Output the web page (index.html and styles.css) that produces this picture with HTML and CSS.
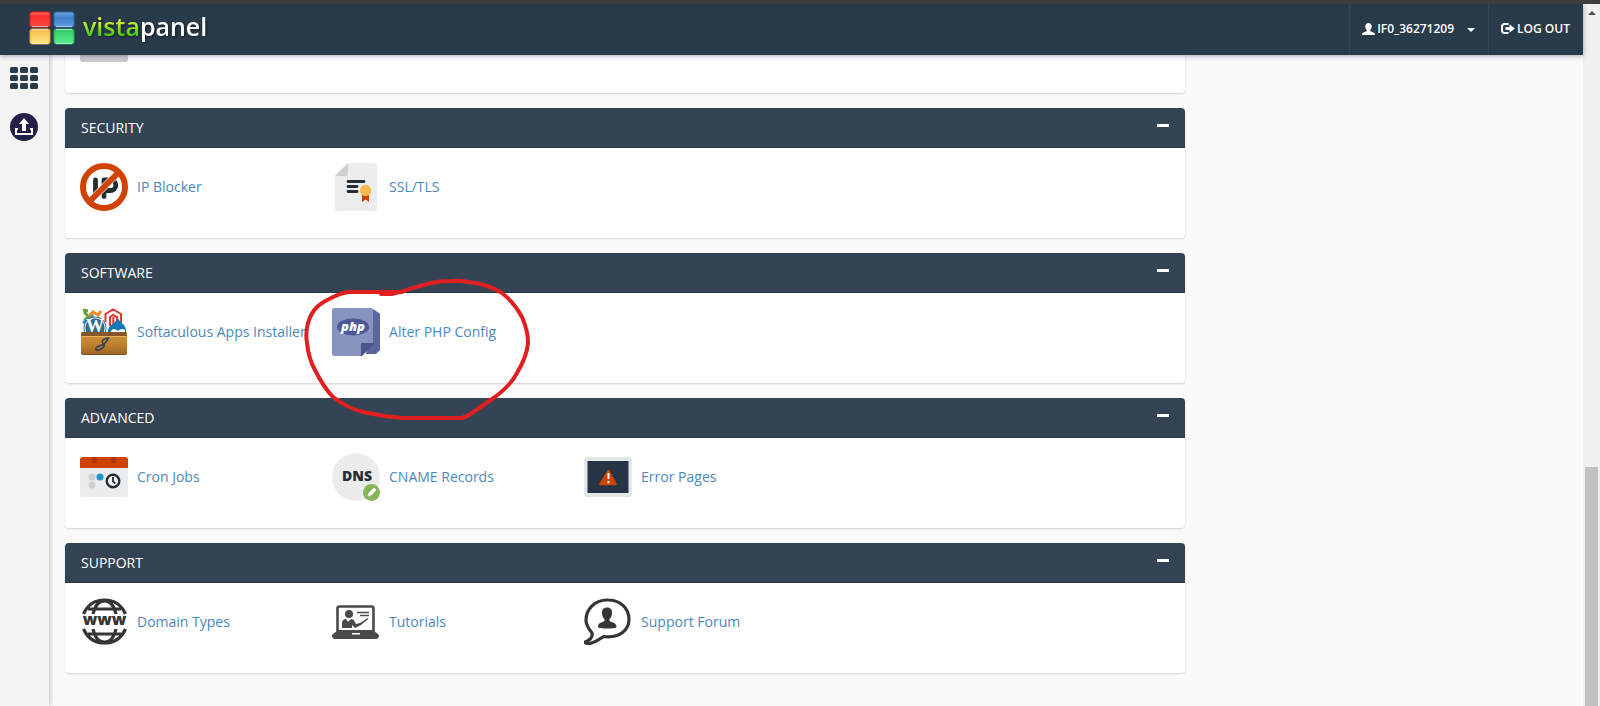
FILE: index.html
```html
<!DOCTYPE html>
<html lang="en">
<head>
  <meta charset="UTF-8" />
  <title>VistaPanel</title>
  <link rel="stylesheet" href="styles.css">
</head>
<body>
  <div class="page">
    <header class="topbar">
      <a class="logo" href="#">
        <svg class="logo-mark" viewBox="0 0 46 34" aria-hidden="true">
          <defs>
            <linearGradient id="red" x2="0" y2="1"><stop offset="0" stop-color="#ff6a5e"/><stop offset=".3" stop-color="#f92f30"/><stop offset="1" stop-color="#ff4a44"/></linearGradient>
            <linearGradient id="blue" x2="0" y2="1"><stop offset="0" stop-color="#6fa5df"/><stop offset=".4" stop-color="#3f83cc"/><stop offset="1" stop-color="#5f9ee0"/></linearGradient>
            <linearGradient id="yellow" x2="0" y2="1"><stop offset="0" stop-color="#f5bd50"/><stop offset="1" stop-color="#ffe67e"/></linearGradient>
            <linearGradient id="green" x2="0" y2="1"><stop offset="0" stop-color="#35c765"/><stop offset="1" stop-color="#56f090"/></linearGradient>
          </defs>
          <rect x="1" y="1" width="20" height="15" rx="2" fill="url(#red)" stroke="#e01c22"/>
          <rect x="25" y="1" width="20" height="15" rx="2" fill="url(#blue)" stroke="#2268b0"/>
          <rect x="1" y="18" width="20" height="15" rx="2" fill="url(#yellow)" stroke="#e0a03c"/>
          <rect x="25" y="18" width="20" height="15" rx="2" fill="url(#green)" stroke="#22a752"/>
          <path d="M3 15.500h16M27 15.500h16M3 18.500h16M27 18.500h16M3 32.500h16M27 32.500h16" stroke="#fff" stroke-opacity=".6"/>
        </svg>
        <span class="logo-text"><span class="logo-vista">vista</span>panel</span>
      </a>
      <nav class="user-nav">
        <a href="#">
          <svg width="13" height="12" viewBox="0 0 13 12" aria-hidden="true"><path fill="#fff" d="M6.500 0C4.400 0 3.300 1.300 3.300 3.200c0 1.600.6 3.100 1.600 3.900v1L1 9.700C.3 10 0 10.600 0 12h13c0-1.400-.3-2-1-2.300L8.100 8.100v-1c1-.8 1.600-2.300 1.600-3.900C9.700 1.300 8.600 0 6.500 0z"/></svg>
          <span>IF0_36271209</span>
          <i class="caret"></i>
        </a>
        <a href="#">
          <svg width="14" height="11" viewBox="0 0 14 11" aria-hidden="true"><path d="M7.500 1H3.400A2.400 2.400 0 0 0 1 3.400v4.200A2.400 2.400 0 0 0 3.400 10h4.100" fill="none" stroke="#fff" stroke-width="2"/><path fill="#fff" d="M4.500 4h4V1.300L13.800 5.500 8.500 9.700V7h-4z"/></svg>
          <span>LOG OUT</span>
        </a>
      </nav>
    </header>

    <div class="content">
      <aside class="sidebar">
        <a href="#" aria-label="Home">
          <svg width="28" height="22" viewBox="0 0 28 22" fill="#293a4a"><rect width="8" height="6" rx="1.500"/><rect x="10" width="8" height="6" rx="1.500"/><rect x="20" width="8" height="6" rx="1.500"/><rect y="8" width="8" height="6" rx="1.500"/><rect x="10" y="8" width="8" height="6" rx="1.500"/><rect x="20" y="8" width="8" height="6" rx="1.500"/><rect y="16" width="8" height="6" rx="1.500"/><rect x="10" y="16" width="8" height="6" rx="1.500"/><rect x="20" y="16" width="8" height="6" rx="1.500"/></svg>
        </a>
        <a href="#" aria-label="Upload">
          <svg width="28" height="28" viewBox="0 0 28 28"><circle cx="14" cy="14" r="14" fill="#22204a"/><path fill="#fff" d="M14 5l5 6h-3v7h-4v-7H9z"/><path d="M8 16H6v5h16v-5h-2" fill="none" stroke="#fff" stroke-width="2"/></svg>
        </a>
      </aside>

      <main class="main">
        <section class="panel panel-cut">
          <div class="cut-icon"></div>
        </section>

        <section class="panel">
          <h2 class="panel-head">SECURITY <button type="button" class="toggle" aria-label="Collapse Security"></button></h2>
          <div class="panel-body">
            <a class="item" href="#">
              <svg class="icon" viewBox="0 0 48 48">
                <circle cx="24" cy="24" r="21" fill="#fff"/>
                <path d="M15.500 17v13.500M24 33.500V17h6.500a5 5 0 0 1 0 10.500H24" fill="none" stroke="#232d35" stroke-width="4.800" stroke-linecap="round" stroke-linejoin="round"/>
                <path d="M9 39L39 9" stroke="#fff" stroke-width="7"/>
                <path d="M9.500 38.500l29-29" stroke="#d04200" stroke-width="6"/>
                <circle cx="24" cy="24" r="21" fill="none" stroke="#d04200" stroke-width="6"/>
              </svg>
              <span>IP Blocker</span>
            </a>
            <a class="item" href="#">
              <svg class="icon" viewBox="0 0 48 48">
                <path fill="#ededed" d="M16 0h27a2 2 0 0 1 2 2v44a2 2 0 0 1-2 2H5a2 2 0 0 1-2-2V13z"/>
                <path fill="#cfcfcf" d="M16 0v11a2 2 0 0 1-2 2H3z"/>
                <path d="M16 18.500h16M16 23.500h9M16 28.500h9" stroke="#232d35" stroke-width="2.800" stroke-linecap="round"/>
                <path fill="#cf4300" d="M30 30h7v9l-3.500-2.500L30 39z"/>
                <circle cx="33.500" cy="27.500" r="5.700" fill="#f7b84d"/>
              </svg>
              <span>SSL/TLS</span>
            </a>
          </div>
        </section>

        <section class="panel">
          <h2 class="panel-head">SOFTWARE <button type="button" class="toggle" aria-label="Collapse Software"></button></h2>
          <div class="panel-body">
            <a class="item" href="#">
              <svg class="icon" viewBox="0 0 48 48">
                <defs>
                  <linearGradient id="box" x2="0" y2="1"><stop offset="0" stop-color="#d0913c"/><stop offset=".5" stop-color="#c28330"/><stop offset="1" stop-color="#9c6424"/></linearGradient>
                </defs>
                <path d="M4 4l5 5 4-3M4 12l5-3M3 2l5 1" fill="none" stroke="#5ea43a" stroke-width="3"/>
                <path d="M9 8l4-4 5 3 3-4" fill="none" stroke="#f28b2c" stroke-width="3"/>
                <path d="M3 15l4-3 3 5M8 14l4-5 5 3" fill="none" stroke="#2e8ec0" stroke-width="3"/>
                <path d="M25.500 14V6L33 1.500 41 6v9M30 18V9l3-2 4 2v6M33.300 9v9" fill="none" stroke="#e3372c" stroke-width="2"/>
                <circle cx="15" cy="20" r="11.500" fill="#2b6c93"/>
                <circle cx="15" cy="20" r="10.200" fill="none" stroke="#fff" stroke-width="1"/>
                <text x="15" y="24" class="wp">W</text>
                <path d="M38 10c1 4 8 6 8 13 0 5-4 8-9 8s-9-3-9-8c0-6 7-7 10-13z" fill="#1179b8"/>
                <path d="M31 23c3-4 6-1 7 0 2-2 6-3 7 0 0 4-4 3-7 1-3 3-7 2-7-1z" fill="#fff"/>
                <path d="M1 24h46v21a2 2 0 0 1-2 2H3a2 2 0 0 1-2-2z" fill="url(#box)"/>
                <path fill="#855629" d="M2 24h44l1 4H1z"/>
                <path d="M2 28.500h44" stroke="#e9b361"/>
                <path d="M2 46.500h44" stroke="#755028"/>
                <path d="M29 30c-5 0-8 3-6 5s2 4-2 6-6 1-5-1 5-2 8-4 3-5 5-6" fill="none" stroke="#354559" stroke-width="1.600"/>
              </svg>
              <span>Softaculous Apps Installer</span>
            </a>
            <a class="item" href="#">
              <svg class="icon" viewBox="0 0 48 48">
                <path fill="#5b669e" d="M41 1l6 4a2 2 0 0 1 1 2v35l-4 4H34z"/>
                <path fill="#8892bf" d="M2 0h37a2 2 0 0 1 2 2v33L29 48H2a2 2 0 0 1-2-2V2a2 2 0 0 1 2-2z"/>
                <path fill="#4b568e" d="M29 35h14L30 48h-1z"/>
                <ellipse cx="21" cy="19" rx="16" ry="8.500" fill="#4b5796"/>
                <text x="21" y="23" class="php">php</text>
              </svg>
              <span>Alter PHP Config</span>
              <svg class="marker" width="226" height="144" viewBox="0 0 226 144" aria-hidden="true">
                <path d="M76 16L97 14H43C36 15 34 16 28 19C23 22 17 24 12 29C8 33 5 38 3 45C1 52 1 59 2 65C3 75 5 83 10 92C15 102 20 111 28 119C37 126 46 131 58 134C71 137 84 139 98 140H157C161 139 164 137 167 135L190 119C198 113 207 105 212 95C218 85 222 76 223 65C223 56 221 48 217 39C212 30 206 22 197 15C187 9 176 5 163 4C158 3 153 2 148 3C142 3 137 3 132 4C114 7 98 14 87 16Z"/>
              </svg>
            </a>
          </div>
        </section>

        <section class="panel">
          <h2 class="panel-head">ADVANCED <button type="button" class="toggle" aria-label="Collapse Advanced"></button></h2>
          <div class="panel-body">
            <a class="item" href="#">
              <svg class="icon" viewBox="0 0 48 48">
                <rect y="4" width="48" height="40" rx="3" fill="#ececec"/>
                <path fill="#d04200" d="M3 4h42a3 3 0 0 1 3 3v8H0V7a3 3 0 0 1 3-3z"/>
                <path fill="#a83606" d="M12 4h5v3.500a2.500 2.500 0 0 1-5 0zM31 4h5v3.500a2.500 2.500 0 0 1-5 0z"/>
                <circle cx="12" cy="24" r="3.500" fill="#cfcfcf"/><circle cx="12" cy="32" r="3.500" fill="#cfcfcf"/><circle cx="20" cy="24" r="3.600" fill="#1997d4"/>
                <circle cx="33" cy="28" r="6.300" fill="#f4f4f4" stroke="#232d35" stroke-width="2.400"/>
                <path d="M33 24v4.500l2.300 2" fill="none" stroke="#232d35" stroke-width="1.800"/>
              </svg>
              <span>Cron Jobs</span>
            </a>
            <a class="item" href="#">
              <svg class="icon" viewBox="0 0 48 48">
                <circle cx="24" cy="24" r="24" fill="#ececec"/>
                <text x="25" y="28" class="dns">DNS</text>
                <circle cx="39.500" cy="39.500" r="8.500" fill="#85b558"/>
                <path d="M36 43l1-3 5-5 2 2-5 5z" fill="#fff" stroke="#fff"/>
              </svg>
              <span>CNAME Records</span>
            </a>
            <a class="item" href="#">
              <svg class="icon" viewBox="0 0 48 48">
                <rect y="4" width="48" height="40" rx="3" fill="#e4e6e8"/>
                <rect x="3.500" y="8" width="41" height="32" fill="#263445"/>
                <path d="M24.500 18l7 13h-15z" fill="#cf4300" stroke="#cf4300" stroke-width="2.500" stroke-linejoin="round"/>
                <path d="M24.500 20v6M24.500 28v2.300" stroke="#fff" stroke-width="2"/>
              </svg>
              <span>Error Pages</span>
            </a>
          </div>
        </section>

        <section class="panel">
          <h2 class="panel-head">SUPPORT <button type="button" class="toggle" aria-label="Collapse Support"></button></h2>
          <div class="panel-body">
            <a class="item" href="#">
              <svg class="icon" viewBox="0 0 48 48">
                <g fill="none" stroke="#353535" stroke-width="3.200">
                  <path d="M3.500 16C8 6 15 2 24.500 2S41 6 45.500 16M13 16c2-9 6-13 11.500-13S34 7 36 16M8 11h33"/>
                  <path d="M3.500 31c4.500 10 11.500 14 21 14S41 41 45.500 31M13 31c2 9 6 13 11.500 13S34 40 36 31M8 36h33"/>
                </g>
                <text x="24.500" y="27" class="www">www</text>
              </svg>
              <span>Domain Types</span>
            </a>
            <a class="item" href="#">
              <svg class="icon" viewBox="0 0 48 48">
                <rect x="5.500" y="8.500" width="36" height="26" rx="2" fill="#fff" stroke="#4a4a4a" stroke-width="2.600"/>
                <path fill="#4a4a4a" d="M6 32h35l6 5c0 3-1 4-4 4H4c-3 0-4-1-4-4z"/>
                <rect x="20" y="35" width="8" height="1.500" fill="#fff"/>
                <circle cx="17" cy="16" r="4" fill="#4a4a4a"/>
                <path fill="#4a4a4a" d="M10 30v-5c0-3 2-4 4-4l2 3 3-3c3 0 4 3 5 5l4-1 7-4-6 6-6 3-3-3v3z"/>
                <path d="M25 14.500h12M28 17.500h9M30 25l6-4.500" stroke="#4a4a4a" stroke-width="1.300"/>
              </svg>
              <span>Tutorials</span>
            </a>
            <a class="item" href="#">
              <svg class="icon" viewBox="0 0 48 48">
                <path d="M24 2C10 1.500 2 12 2 22c0 6 3 9 6 13 1 4-2 7-7 9 0 1 1 1.500 3 1.500 6 0 10-4 16-7 16 2 25-7 25-17C45 10 36 2 24 2z" fill="#fff" stroke="#353535" stroke-width="3.200" stroke-linejoin="round"/>
                <path fill="#353535" d="M23 9.500c3.500 0 5.500 2.500 5 6-.3 3-1.300 4.500-2.500 5.500v2c1.500 1.500 7 1 7 6 0 2-18.500 2-18.500 0 0-5 5-4.500 6.500-6v-2c-1.200-1-2.200-2.500-2.500-5.500-.5-3.500 1.500-6 5-6z"/>
              </svg>
              <span>Support Forum</span>
            </a>
          </div>
        </section>
      </main>
    </div>
  </div>

  <div class="scrollbar">
    <i class="scroll-up"></i>
    <div class="scroll-thumb"></div>
  </div>
</body>
</html>
```
FILE: styles.css
```css
* {
  box-sizing: border-box;
}
body {
  margin: 0;
  min-height: 100vh;
  display: flex;
  border-top: 4px solid #3d3d3b;
  background: #fafafa;
  font-family: "Open Sans", sans-serif;
  font-size: 14px;
  line-height: 20px;
}
a {
  color: #4b88c0;
  text-decoration: none;
}
.page {
  flex: 1;
  display: flex;
  flex-direction: column;
}

/* top bar */
.topbar {
  position: relative;
  z-index: 2;
  height: 51px;
  display: flex;
  justify-content: space-between;
  background: #293a4a;
  box-shadow: 0 1px 5px rgba(30, 45, 70, 0.4);
}
.logo {
  display: flex;
  align-items: center;
  gap: 8px;
  padding: 0 0 3px 29px;
  color: #fff;
}
.logo-mark {
  width: 46px;
  height: 34px;
}
.logo-text {
  font-size: 25px;
  font-weight: 600;
  line-height: 32px;
  padding-bottom: 4px;
  filter: drop-shadow(1px 1px 1px rgba(0, 0, 0, 0.5));
}
.logo-vista {
  background: linear-gradient(#e4f53c 30%, #4fd010 75%);
  -webkit-background-clip: text;
  background-clip: text;
  color: transparent;
}
.user-nav {
  display: flex;
}
.user-nav a {
  display: flex;
  align-items: center;
  gap: 2px;
  padding: 0 13px 2px 12px;
  border-left: 1px solid #364656;
  color: #fff;
  font-size: 12px;
  font-weight: 600;
}
.caret {
  margin: 2px 0 0 11px;
  border: 4px solid transparent;
  border-top-color: #fff;
  border-bottom: 0;
}

/* layout */
.content {
  flex: 1;
  display: flex;
}
.sidebar {
  width: 49px;
  display: flex;
  flex-direction: column;
  align-items: flex-start;
  gap: 24px;
  padding: 12px 0 0 10px;
  background: #f4f4f4;
  box-shadow: 1px 0 5px rgba(0, 0, 0, 0.25);
}
.sidebar svg {
  display: block;
}
.main {
  flex: 1;
  padding: 0 calc(25% + 2px) 0 16px;
}

/* panels */
.panel {
  margin-bottom: 15px;
  border-radius: 4px;
  background: #fff;
  box-shadow: 0 1px 2px rgba(0, 0, 0, 0.15);
}
.panel-cut {
  height: 38px;
  padding-left: 15px;
  border-radius: 0 0 4px 4px;
}
.cut-icon {
  width: 48px;
  height: 7px;
  border-radius: 0 0 3px 3px;
  background: #cbcbcb;
}
.panel-head {
  display: flex;
  justify-content: space-between;
  align-items: center;
  height: 40px;
  margin: 0;
  padding: 0 16px;
  border-bottom: 1px solid #293a4a;
  border-radius: 4px 4px 0 0;
  background: #354454;
  color: #fff;
  font-size: 14px;
  font-weight: 400;
}
.toggle {
  width: 12px;
  height: 3px;
  margin-bottom: 4px;
  padding: 0;
  border: 0;
  background: #fff;
  cursor: pointer;
}
.panel-body {
  display: grid;
  grid-template-columns: repeat(4, 22.5%);
  padding: 15px 0 27px;
}
.item {
  position: relative;
  display: flex;
  align-items: center;
  gap: 9px;
  padding-left: 15px;
  white-space: nowrap;
}
.icon {
  flex: none;
  width: 48px;
  height: 48px;
}
.icon text {
  font-family: "Open Sans", sans-serif;
  font-weight: 800;
  text-anchor: middle;
}
.icon .wp {
  font-family: "Liberation Serif", serif;
  font-size: 18px;
  fill: #fff;
}
.icon .php {
  font-size: 13px;
  font-style: italic;
  fill: #fff;
}
.icon .dns {
  font-size: 14px;
  fill: #232d35;
}
.icon .www {
  font-size: 16px;
  fill: #353535;
}
/* hand drawn ring around the PHP item */
.marker {
  position: absolute;
  z-index: 1;
  left: -12px;
  top: -30px;
  overflow: visible;
  pointer-events: none;
}
.marker path {
  fill: none;
  stroke: #e02020;
  stroke-width: 4;
  stroke-linecap: round;
  stroke-linejoin: round;
}

/* scrollbar */
.scrollbar {
  width: 17px;
  display: flex;
  flex-direction: column;
  align-items: center;
  justify-content: space-between;
  background: #f0f0f0;
}
.scroll-up {
  margin-top: 7px;
  border: 4px solid transparent;
  border-top: 0;
  border-bottom-color: #505050;
}
.scroll-thumb {
  width: 13px;
  height: 34%;
  background: #c1c1c1;
}
```
